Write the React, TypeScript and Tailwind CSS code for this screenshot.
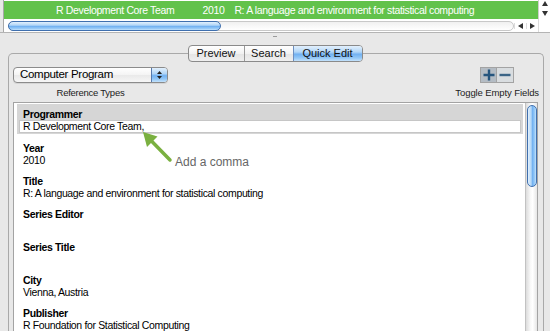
import React from "react";

const blueH =
  "bg-[linear-gradient(to_bottom,#e2f0fd_0%,#b2d6f7_40%,#72b1f1_55%,#94c8f7_80%,#c4e2fb_100%)]";
const blueV =
  "bg-[linear-gradient(to_right,#e2f0fd_0%,#b2d6f7_40%,#72b1f1_55%,#94c8f7_80%,#c4e2fb_100%)]";

function Tri({ dir, className }: { dir: "up" | "down" | "left" | "right"; className?: string }) {
  const pts: Record<string, string> = {
    up: "0,5 3,0 6,5",
    down: "0,0 6,0 3,5",
    left: "5,0 5,6 0,3",
    right: "0,0 0,6 5,3",
  };
  const horiz = dir === "left" || dir === "right";
  return (
    <svg width={horiz ? 5 : 6} height={horiz ? 6 : 5} className={className}>
      <polygon points={pts[dir]} fill="#333" />
    </svg>
  );
}

export default function App() {
  const fields: [string, string][] = [
    ["Year", "2010"],
    ["Title", "R: A language and environment for statistical computing"],
    ["Series Editor", ""],
    ["Series Title", ""],
    ["City", "Vienna, Austria"],
    ["Publisher", "R Foundation for Statistical Computing"],
  ];
  return (
    <div className="relative w-[550px] h-[331px] overflow-hidden bg-[#e8e8e8] flex flex-col font-['Liberation_Sans',Arial,sans-serif] text-black">
      {/* top table */}
      <div className="flex h-[19px] shrink-0">
        <div className="w-[4px] border-r border-[#a8a8a8]" />
        <div className="flex-1 bg-white pt-[1px]">
          <div className="h-[18px] bg-[#62c24b] flex items-center text-white text-[10.5px] tracking-[-0.35px] leading-none whitespace-nowrap">
            <span className="ml-[52px]">R Development Core Team</span>
            <span className="ml-[28px]">2010</span>
            <span className="ml-[10px]">R: A language and environment for statistical computing</span>
          </div>
        </div>
        <div className="w-[12px] bg-white border-l border-[#cfcfcf] flex flex-col items-center pt-[1px] gap-[5px]">
          <Tri dir="up" />
          <Tri dir="down" />
        </div>
      </div>
      <div className="flex h-[14px] shrink-0 border-b border-[#b4b4b4]">
        <div className="w-[4px] border-r border-[#a8a8a8]" />
        <div className="flex-1 bg-white flex items-center">
          <div className="ml-[4px] w-[506px] h-[10px] rounded-full border border-[#c8c8c8] bg-[linear-gradient(to_bottom,#f0f0f0,#ffffff)] flex items-center">
            <div className={`w-[213px] h-[10px] -ml-[1px] rounded-full border border-[#3f6fae] ${blueH}`} />
          </div>
          <div className="ml-auto flex items-center h-full">
            <div className="w-[12px] flex justify-center border-l border-[#dcdcdc]"><Tri dir="left" /></div>
            <div className="w-[12px] flex justify-center border-l border-[#dcdcdc]"><Tri dir="right" /></div>
          </div>
        </div>
        <div className="w-[12px] bg-white border-l border-[#dcdcdc]" />
      </div>

      {/* splitter mark */}
      <div className="h-[12px] shrink-0 flex justify-center pt-[2px]">
        <div className="w-[4px] h-[2px] border-b border-[#9a9a9a]" />
      </div>

      {/* tabs */}
      <div className="relative z-10 flex justify-center shrink-0">
        <div className="flex h-[17px] rounded-[4px] border border-[#8a8a8a] overflow-hidden text-[11px] leading-none text-[#111] bg-[linear-gradient(to_bottom,#ffffff,#f2f2f2_50%,#e4e4e4_51%,#efefef)]">
          <div className="w-[56px] flex items-center justify-center border-r border-[#9a9a9a]">Preview</div>
          <div className="w-[49px] flex items-center justify-center border-r border-[#6d8fc0]">Search</div>
          <div className={`w-[68px] flex items-center justify-center ${blueH}`}>Quick Edit</div>
        </div>
      </div>

      {/* box */}
      <div className="-mt-[9px] ml-[8px] mr-[6px] flex-1 rounded-t-[5px] border border-b-0 border-[#a9a9a9] pt-[13px] pl-[4px] pr-[4px] flex flex-col min-h-0">
        <div className="flex justify-between items-start shrink-0">
          <div className="flex flex-col items-center">
            <div className="w-[155px] h-[16px] rounded-[4px] border border-[#8b8b8b] flex overflow-hidden bg-[linear-gradient(to_bottom,#ffffff,#f4f4f4_50%,#e9e9e9_51%,#f6f6f6)] shadow-[0_1px_0_rgba(0,0,0,0.08)]">
              <div className="flex-1 flex items-center pl-[6px] text-[11.5px] tracking-[-0.3px] leading-none">Computer Program</div>
              <div className={`w-[16px] border-l border-[#5579ad] flex flex-col items-center justify-center gap-[2px] ${blueH}`}>
                <svg width="5" height="3"><polygon points="0,3 2.5,0 5,3" fill="#222" /></svg>
                <svg width="5" height="3"><polygon points="0,0 5,0 2.5,3" fill="#222" /></svg>
              </div>
            </div>
            <div className="mt-[4px] text-[9.5px] tracking-[-0.25px] leading-[12px] text-[#222]">Reference Types</div>
          </div>
          <div className="flex flex-col items-center">
            <div className="flex h-[16px] border border-[#a3a3a3]">
              <div className="w-[16px] bg-[#b4bcc4] flex items-center justify-center border-r border-[#a3a3a3]">
                <svg width="12" height="12"><path d="M6 0.5V11.5M0.5 6H11.5" stroke="#25557e" strokeWidth="2.4" /></svg>
              </div>
              <div className="w-[16px] bg-[#d9dde0] flex items-center justify-center">
                <svg width="12" height="12"><path d="M0.5 6H11.5" stroke="#3a6486" strokeWidth="2.4" /></svg>
              </div>
            </div>
            <div className="mt-[4px] text-[9.5px] tracking-[-0.1px] leading-[12px] text-[#222]">Toggle Empty Fields</div>
          </div>
        </div>

        {/* list */}
        <div className="mt-[3px] mr-[1px] flex-1 border border-b-0 border-[#a3a3a3] bg-white flex min-h-0">
          <div className="flex-1 pt-[1px] pl-[3px] pr-[2px] text-[10.5px] tracking-[-0.35px]">
            <div className="bg-[#d6d6d6] pt-[4px] pb-[1px] px-[2px]">
              <div className="pl-[4px] font-bold leading-[12px]">Programmer</div>
              <div className="h-[13px] bg-white border border-[#c6c6c6] pl-[3px] leading-[11px]">R Development Core Team,</div>
            </div>
            <div className="pl-[6px] pt-[8px]">
              {fields.map(([l, v]) => (
                <div key={l} className="h-[33px]">
                  <div className="font-bold leading-[12px]">{l}</div>
                  <div className="leading-[12px]">{v}</div>
                </div>
              ))}
            </div>
          </div>
          <div className="w-[12px] border-l border-[#c2c2c2] bg-[linear-gradient(to_right,#dcdcdc,#f8f8f8_40%,#ffffff_60%,#e6e6e6)] pt-[2px] flex justify-center">
            <div className={`w-[10px] h-[82px] rounded-full border border-[#3f6fae] ${blueV}`} />
          </div>
        </div>
      </div>

      {/* annotation */}
      <svg className="absolute left-0 top-0 pointer-events-none" width="550" height="331">
        <line x1="170" y1="160" x2="151" y2="140.5" stroke="#7ab040" strokeWidth="3.5" strokeLinecap="round" />
        <polygon points="143,132 157.5,136.5 147,147" fill="#7ab040" />
      </svg>
      <div className="absolute left-[175px] top-[154px] text-[12px] leading-[16px] text-[#666]">Add a comma</div>
    </div>
  );
}
